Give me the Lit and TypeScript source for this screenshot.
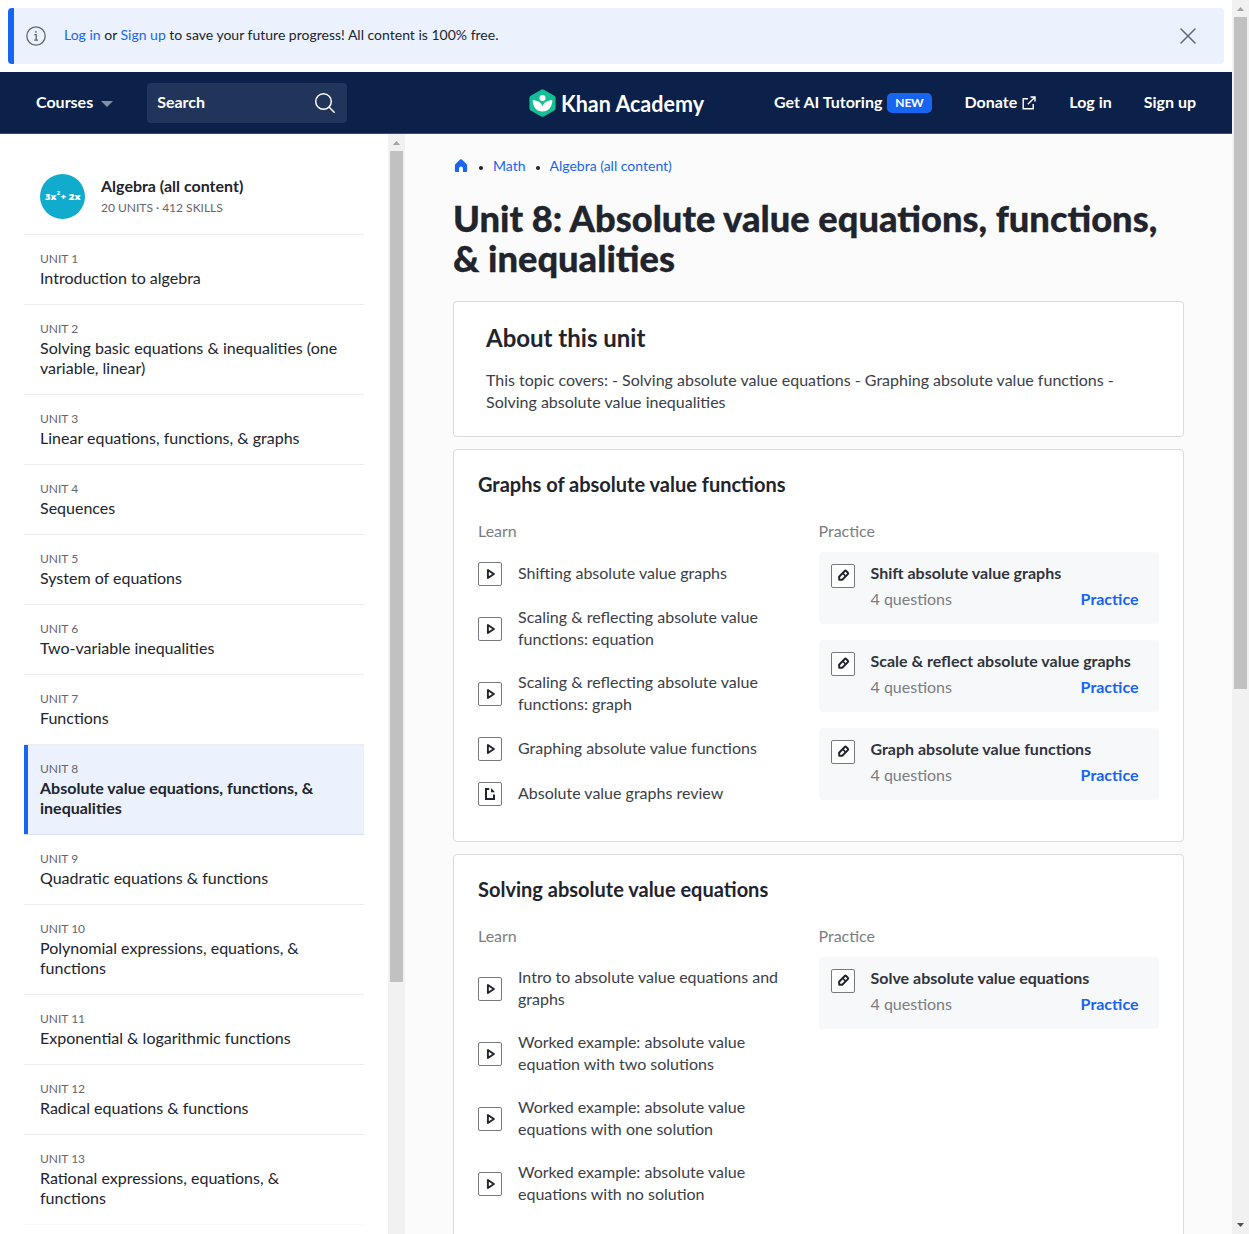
import { LitElement, html, css, svg } from "lit";
import { customElement } from "lit/decorators.js";
import { classMap } from "lit/directives/class-map.js";

const units: string[] = [
  "Introduction to algebra",
  "Solving basic equations & inequalities (one variable, linear)",
  "Linear equations, functions, & graphs",
  "Sequences",
  "System of equations",
  "Two-variable inequalities",
  "Functions",
  "Absolute value equations, functions, & inequalities",
  "Quadratic equations & functions",
  "Polynomial expressions, equations, & functions",
  "Exponential & logarithmic functions",
  "Radical equations & functions",
  "Rational expressions, equations, & functions",
];
const currentUnit = 8;

interface LearnItem { kind: "video" | "article"; title: string }
interface Lesson { title: string; learn: LearnItem[]; practice: string[] }

const video = (title: string): LearnItem => ({ kind: "video", title });

const lessons: Lesson[] = [
  {
    title: "Graphs of absolute value functions",
    learn: [
      video("Shifting absolute value graphs"),
      video("Scaling & reflecting absolute value functions: equation"),
      video("Scaling & reflecting absolute value functions: graph"),
      video("Graphing absolute value functions"),
      { kind: "article", title: "Absolute value graphs review" },
    ],
    practice: ["Shift absolute value graphs", "Scale & reflect absolute value graphs", "Graph absolute value functions"],
  },
  {
    title: "Solving absolute value equations",
    learn: [
      video("Intro to absolute value equations and graphs"),
      video("Worked example: absolute value equation with two solutions"),
      video("Worked example: absolute value equations with one solution"),
      video("Worked example: absolute value equations with no solution"),
    ],
    practice: ["Solve absolute value equations"],
  },
];

const glyphs = {
  video: svg`<path d="M9.900 8v8L15.900 12z" fill="none" stroke="#21242c" stroke-width="1.900" stroke-linejoin="round"/>`,
  article: svg`<path d="M11.200 7H8v10h8v-4.600" fill="none" stroke="#21242c" stroke-width="2"/><path d="M13 6v4.200h4z" fill="#21242c"/>`,
  exercise: svg`<g transform="translate(.2 -.3) rotate(-45 12 12)" fill="none" stroke="#21242c"><path d="M8.400 9.800h8a1 1 0 0 1 1 1v2.400a1 1 0 0 1-1 1h-8L6.400 12z" stroke-width="2" stroke-linejoin="round"/><path d="M13.400 10v4" stroke-width="1.600"/></g>`,
};

const contentIcon = (kind: keyof typeof glyphs) => html`
  <svg class="kind" width="24" height="24" viewBox="0 0 24 24">
    <rect x="0.5" y="0.5" width="23" height="23" rx="1.5" fill="#fff" stroke="#77797e"/>
    ${glyphs[kind]}
  </svg>`;

@customElement("app-banner")
class AppBanner extends LitElement {
  static styles = css`
    :host { display: flex; align-items: center; box-sizing: border-box; height: 56px; margin: 8px;
      padding: 0 24px 0 12px; border-left: 6px solid #1865f2; border-radius: 4px; background: #ebf2fe; }
    .info { margin-right: 18px; }
    .text { flex: 1; font-size: 14px; line-height: 20px; padding-bottom: 2px; font-variant-ligatures: none; }
    .link { color: #1865f2; }
  `;
  render() {
    return html`
      <svg class="info" width="20" height="20" viewBox="0 0 20 20" fill="none" stroke="#64666d" stroke-width="1.3">
        <circle cx="10" cy="10" r="9.2"/><path d="M8.4 8.6h1.8v5.4M8.2 14.2h3.8"/><circle cx="9.9" cy="5.9" r=".6" fill="#64666d" stroke-width=".6"/>
      </svg>
      <div class="text"><span class="link">Log in</span> or <span class="link">Sign up</span> to save your future progress! All content is 100% free.</div>
      <svg width="24" height="24" viewBox="0 0 24 24"><path d="M5 5l14 14M19 5L5 19" stroke="#64666d" stroke-width="1.5" stroke-linecap="round"/></svg>`;
  }
}

@customElement("app-nav")
class AppNav extends LitElement {
  static styles = css`
    :host { display: grid; grid-template-columns: 1fr auto 1fr; align-items: center; box-sizing: border-box;
      height: 62px; padding: 0 36px; background: #0b2149; border-bottom: 1px solid #3b4d6d; color: #fff;
      font-size: 16px; line-height: 20px; font-weight: 700; }
    .left { display: flex; align-items: center; }
    .word { padding-bottom: 2px; }
    .caret { margin: 2px 34px 0 8px; }
    .search { display: flex; align-items: center; justify-content: space-between; box-sizing: border-box;
      width: 200px; height: 40px; padding: 0 11px 0 10px; border-radius: 4px; background: #21345a; }
    .logo { display: block; margin-left: 3px; }
    .brand { font-size: 22px; font-weight: 700; fill: #fff; }
    .right { display: flex; justify-content: flex-end; align-items: center; gap: 32px; }
    .entry { display: flex; align-items: center; white-space: nowrap; }
    .tutor { margin-right: 1px; }
    .donate { margin-right: 1px; }
    .new { margin-left: 5px; padding: 0 8px; border-radius: 5px; background: #1865f2; font-size: 12px; line-height: 20px; letter-spacing: -0.2px; }
    .ext { margin-left: 5px; }
  `;
  render() {
    return html`
      <div class="left">
        <span class="word">Courses</span>
        <svg class="caret" width="12" height="6" viewBox="0 0 12 6"><path d="M0 0h12L6 6z" fill="#8590a4"/></svg>
        <div class="search"><span class="word">Search</span>
          <svg width="22" height="22" viewBox="0 0 22 22" fill="none" stroke="#fff" stroke-width="1.5" stroke-linecap="round"><circle cx="9.5" cy="9.5" r="7.8"/><path d="M15.2 15.2l5 5"/></svg>
        </div>
      </div>
      <svg class="logo" width="177" height="32" viewBox="0 0 177 32">
        <path d="M12.2 2.7q1.3-.7 2.6 0l10.5 6q1.3.8 1.3 2.2v10.400q0 1.400-1.300 2.200l-10.500 6q-1.300.7-2.600 0l-10.500-6Q.4 22.700.4 21.300V10.900q0-1.400 1.300-2.200z" fill="#14bf96"/>
        <circle cx="13.500" cy="11" r="3" fill="#fff"/>
        <path d="M3.700 13.200c5 0 8.700 2.400 9.800 6.200 1.100-3.800 4.800-6.200 9.800-6.200 0 6.700-4 11.300-9.800 11.300S3.700 19.900 3.700 13.200z" fill="#fff"/>
        <text class="brand" x="32" y="24.500" textLength="143" lengthAdjust="spacingAndGlyphs">Khan Academy</text>
      </svg>
      <div class="right">
        <span class="entry tutor"><span class="word">Get AI Tutoring</span><span class="new">NEW</span></span>
        <span class="entry donate"><span class="word">Donate</span><svg class="ext" width="14" height="14" viewBox="0 0 14 14" fill="none" stroke="#fff" stroke-width="1.400"><path d="M6 2.800H1.200v10h10V8M8.500 1H13v4.500M12.800 1.200L5.800 8.200"/></svg></span>
        <span class="entry word">Log in</span>
        <span class="entry word">Sign up</span>
      </div>`;
  }
}

@customElement("app-scrollbar")
class AppScrollbar extends LitElement {
  static styles = css`
    :host { display: flex; flex-direction: column; align-items: center; flex: none; width: 17px; background: #f1f1f1; }
    .arrow { flex: none; display: block; }
    .thumb { width: 13px; background: #c1c1c1; }
    .long { height: 831px; }
    .page { height: 672px; margin-bottom: auto; }
  `;
  static properties = { kind: {} };
  declare kind: string;
  render() {
    const page = this.kind === "page";
    return html`
      <svg class="arrow" width="17" height="17" viewBox="0 0 17 17"><path d="M5 11h7L8.500 7z" fill="#a3a3a3"/></svg>
      <div class=${classMap({ thumb: true, page, long: !page })}></div>
      ${page ? html`<svg class="arrow" width="17" height="17" viewBox="0 0 17 17"><path d="M5 6h7L8.500 10z" fill="#505050"/></svg>` : null}`;
  }
}

@customElement("app-sidebar")
class AppSidebar extends LitElement {
  static styles = css`
    :host { display: flex; flex: none; width: 405px; background: #fff; overflow: hidden; }
    .list { flex: 1; padding: 24px 24px 0; }
    .course { display: flex; align-items: center; box-sizing: border-box; height: 77px; padding: 0 16px;
      border-bottom: 1px solid #ededee; }
    .badge { flex: none; margin-right: 16px; }
    .formula { font-family: "Open Sans", sans-serif; font-size: 9.5px; font-weight: 800; fill: #fff; }
    .power { font-family: "Open Sans", sans-serif; font-size: 5px; font-weight: 800; fill: #fff; }
    .name { font-size: 16px; line-height: 20px; font-weight: 700; }
    .label { font-size: 12px; line-height: 16px; color: #64666d; }
    .stats { margin: 4px 0 1px; }
    .unit { padding: 16px; border-bottom: 1px solid #ededee; }
    .unit:last-child { border-color: #f9f9f9; }
    .title { font-size: 16px; line-height: 20px; margin-top: 1px; }
    .current { background: #ebf2fe; box-shadow: inset 4px 0 #1865f2; border-color: #d9e1f1; font-weight: 700; }
    .current .label { font-weight: 400; }
  `;
  render() {
    return html`
      <div class="list">
        <div class="course">
          <svg class="badge" width="45" height="45" viewBox="0 0 45 45">
            <circle cx="22.500" cy="22.500" r="22.500" fill="#11accd"/>
            <text class="formula" x="5" y="26" textLength="11.500" lengthAdjust="spacingAndGlyphs">3x</text>
            <text class="power" x="17" y="20.500">2</text>
            <text class="formula" x="20.500" y="26" textLength="20" lengthAdjust="spacingAndGlyphs">+ 2x</text>
          </svg>
          <div>
            <div class="name">Algebra (all content)</div>
            <div class="label stats">20 UNITS · 412 SKILLS</div>
          </div>
        </div>
        ${units.map((title, i) => html`
          <div class=${classMap({ unit: true, current: i + 1 === currentUnit })}>
            <div class="label">UNIT ${i + 1}</div>
            <div class="title">${title}</div>
          </div>`)}
      </div>
      <app-scrollbar kind="sidebar"></app-scrollbar>`;
  }
}

@customElement("app-lesson")
class AppLesson extends LitElement {
  static properties = { lesson: { attribute: false } };
  declare lesson: Lesson;
  static styles = css`
    :host { display: block; box-sizing: border-box; padding: 22px 24px 35px; background: #fff;
      border: 1px solid #d9dadc; border-radius: 4px; }
    .heading { font-size: 20px; line-height: 24px; font-weight: 700; margin: 0 0 25px; }
    .cols { display: grid; grid-template-columns: 1fr 1fr; }
    .sub { font-size: 16px; line-height: 20px; color: #7b7d83; }
    .learn { display: flex; flex-direction: column; gap: 21px; margin-top: 21px; }
    .item { display: flex; align-items: center; gap: 16px; padding-right: 40px; font-size: 16px; line-height: 22px; color: #3b3e46; }
    .item-title { margin: -1px 0 1px; }
    .kind { flex: none; display: block; }
    .practice { display: flex; flex-direction: column; gap: 16px; margin-top: 11px; }
    .task { display: flex; box-sizing: border-box; height: 72px; padding: 12px 20.5px 0 12px; border-radius: 4px; background: #f7f8fa; font-size: 16px; line-height: 22px; }
    .body { flex: 1; margin: -1px 0 0 16px; }
    .task-title { font-weight: 700; line-height: 20px; white-space: nowrap; color: #31343b; }
    .row { display: flex; justify-content: space-between; margin-top: 5px; color: #7b7d83; }
    .go { color: #1865f2; font-weight: 700; }
  `;
  render() {
    return html`
      <h3 class="heading">${this.lesson.title}</h3>
      <div class="cols">
        <div>
          <div class="sub">Learn</div>
          <div class="learn">${this.lesson.learn.map((l) => html`<div class="item">${contentIcon(l.kind)}<span class="item-title">${l.title}</span></div>`)}</div>
        </div>
        <div>
          <div class="sub">Practice</div>
          <div class="practice">${this.lesson.practice.map((p) => html`
            <div class="task">${contentIcon("exercise")}
              <div class="body">
                <div class="task-title">${p}</div>
                <div class="row"><span>4 questions</span><span class="go">Practice</span></div>
              </div>
            </div>`)}</div>
        </div>
      </div>`;
  }
}

@customElement("app-root")
class AppRoot extends LitElement {
  static styles = css`
    :host { display: flex; height: 1234px; overflow: hidden; background: #fff; color: #21242c; font-family: Lato, "Liberation Sans", sans-serif; }
    .page { flex: 1; display: flex; flex-direction: column; min-width: 0; }
    .content { flex: 1; display: flex; min-height: 0; }
    .main { flex: 1; min-width: 0; padding: 22px 48px 0; background: #fbfbfb; overflow: hidden; }
    .crumbs { display: flex; align-items: center; height: 20px; font-size: 14px; line-height: 20px; color: #1865f2; }
    .dot { width: 4px; height: 4px; margin: 3px 10px 0; border-radius: 2px; background: #21242c; }
    .heading { margin: 22px 0 23px; font-size: 36.25px; line-height: 40px; font-weight: 900; -webkit-text-stroke: 0.3px #21242c; }
    .about { box-sizing: border-box; height: 136px; margin-bottom: 12px; padding: 22px 32px 0; background: #fff;
      border: 1px solid #d9dadc; border-radius: 4px; }
    .about-title { margin: 0 0 17px; font-size: 24px; line-height: 28px; font-weight: 700; }
    .about-text { font-size: 16px; line-height: 22px; color: #3b3e46; }
    .lesson { margin-bottom: 12px; }
  `;
  render() {
    return html`
      <div class="page">
        <app-banner></app-banner>
        <app-nav></app-nav>
        <div class="content">
          <app-sidebar></app-sidebar>
          <div class="main">
            <div class="crumbs">
              <svg width="16" height="16" viewBox="0 0 16 16"><path d="M8 1.200q.5 0 .9.400l4.600 4.300q.6.600.6 1.400V13q0 1-1 1H10v-3.500a2 2 0 0 0-4 0V14H2.900q-1 0-1-1V7.300q0-.8.6-1.400l4.600-4.300q.4-.4.900-.4z" fill="#1865f2"/></svg>
              <span class="dot"></span><span>Math</span><span class="dot"></span><span>Algebra (all content)</span>
            </div>
            <h1 class="heading">Unit 8: Absolute value equations, functions, &amp; inequalities</h1>
            <div class="about">
              <h2 class="about-title">About this unit</h2>
              <div class="about-text">This topic covers: - Solving absolute value equations - Graphing absolute value functions - Solving absolute value inequalities</div>
            </div>
            ${lessons.map((l) => html`<app-lesson class="lesson" .lesson=${l}></app-lesson>`)}
          </div>
        </div>
      </div>
      <app-scrollbar kind="page"></app-scrollbar>`;
  }
}
